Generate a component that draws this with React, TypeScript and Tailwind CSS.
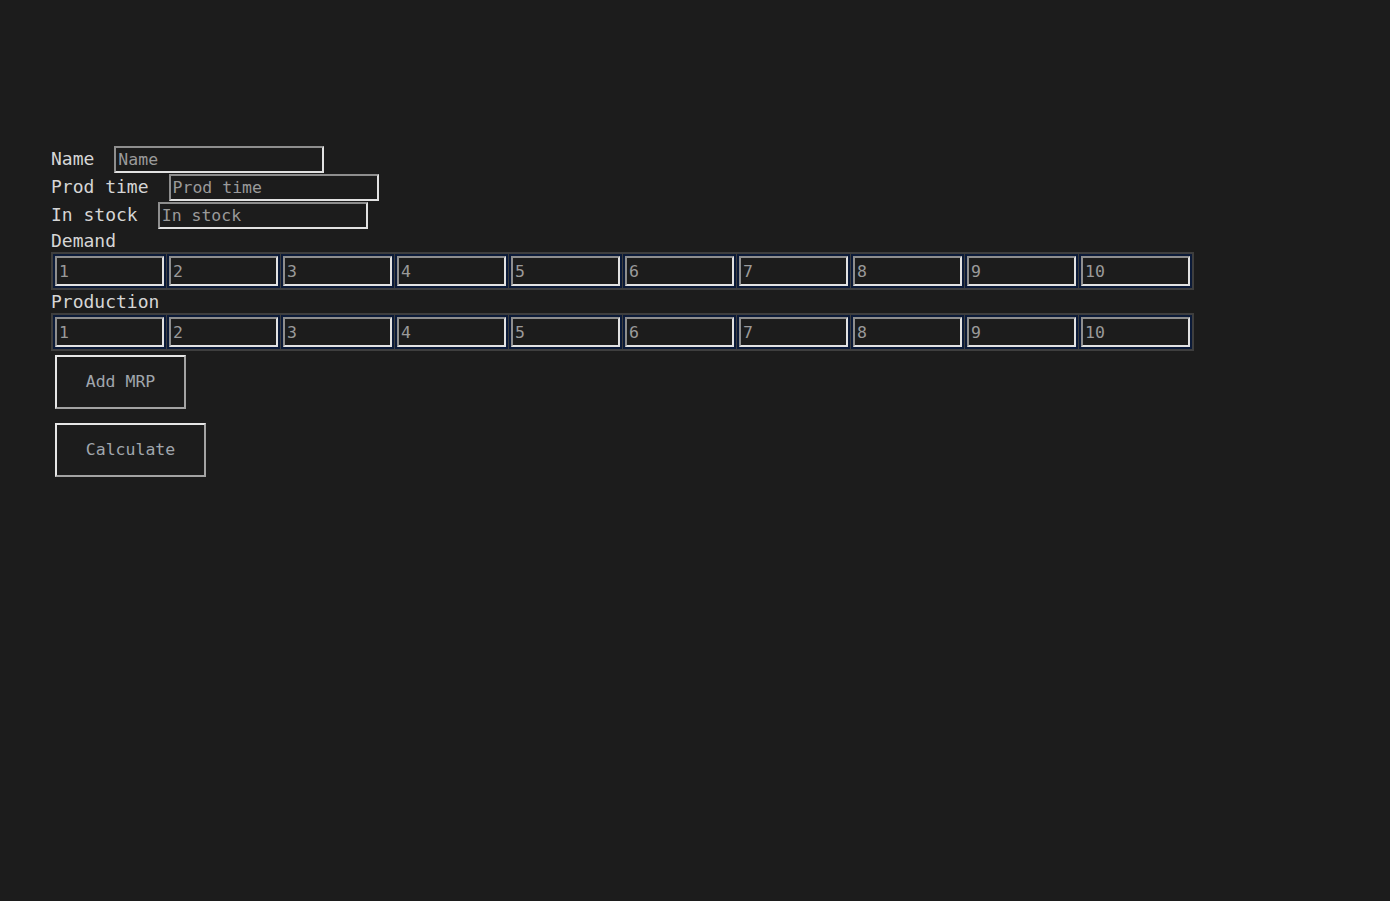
import React from 'react';

const periods = [1, 2, 3, 4, 5, 6, 7, 8, 9, 10];

const inputCls =
  'h-[27px] w-[210px] bg-[#1c1c1c] px-[2px] text-[16.5px] text-[#a3a3a3] placeholder:text-[#9a9a9a] outline-none border-2 border-t-[#8e8e8e] border-l-[#8e8e8e] border-b-[#e2e2e2] border-r-[#e2e2e2]';

function Field({ label }: { label: string }) {
  return (
    <div className="flex h-[28px] items-center gap-5">
      <span className="text-[18px] leading-none text-[#d6d6d6]">{label}</span>
      <input className={inputCls} placeholder={label} />
    </div>
  );
}

function PeriodTable() {
  return (
    <div className="flex w-fit gap-px border-2 border-[#3e3e3e] bg-[#3e3e3e]">
      {periods.map((p) => (
        <div key={p} className="bg-[#0b1a38] p-[2px]">
          <input
            className="h-[30px] w-[109px] bg-[#1c1c1c] px-[2px] text-[16.5px] text-[#a3a3a3] placeholder:text-[#9a9a9a] outline-none border-2 border-t-[#8e8e8e] border-l-[#8e8e8e] border-b-[#e2e2e2] border-r-[#e2e2e2]"
            placeholder={String(p)}
          />
        </div>
      ))}
    </div>
  );
}

function Button({ children, width }: { children: React.ReactNode; width: string }) {
  return (
    <button
      className={`${width} h-[54px] bg-[#1c1c1c] text-[16.5px] text-[#a0a6ad] border-2 border-t-[#e6e6e6] border-l-[#e6e6e6] border-b-[#a3a3a3] border-r-[#a3a3a3]`}
    >
      {children}
    </button>
  );
}

export default function App() {
  return (
    <div
      className="min-h-screen bg-[#1c1c1c] pl-[51px] pt-[145px]"
      style={{ fontFamily: '"DejaVu Sans Mono", "Liberation Mono", monospace' }}
    >
      <Field label="Name" />
      <Field label="Prod time" />
      <Field label="In stock" />
      <div className="flex h-[23px] items-center text-[18px] leading-none text-[#d6d6d6]">Demand</div>
      <PeriodTable />
      <div className="flex h-[23px] items-center text-[18px] leading-none text-[#d6d6d6]">Production</div>
      <PeriodTable />
      <div className="ml-[4px] mt-[4px] flex flex-col items-start gap-[14px]">
        <Button width="w-[131px]">Add MRP</Button>
        <Button width="w-[151px]">Calculate</Button>
      </div>
    </div>
  );
}
